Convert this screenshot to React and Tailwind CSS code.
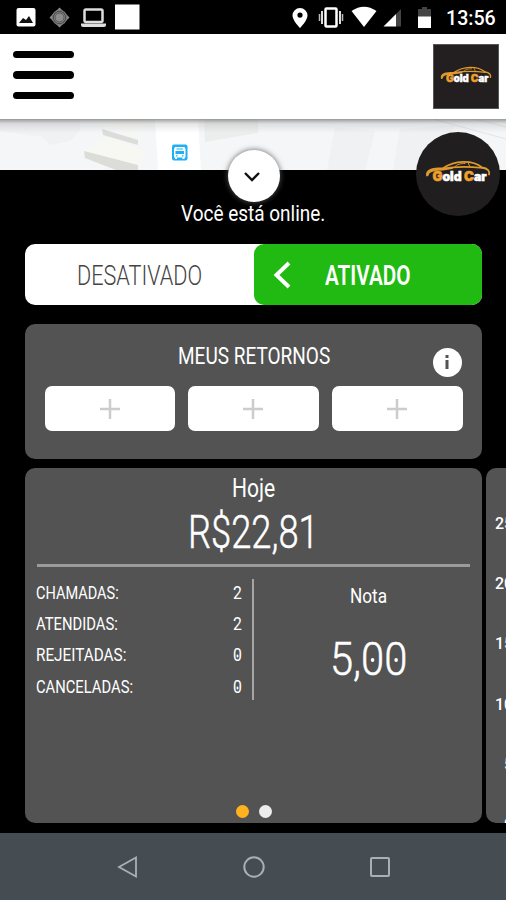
import { useLayoutEffect, useRef, useState } from "react";

// Condensed text: squeezes its content horizontally to the given width.
function Fit({ w, className = "", children }) {
  const ref = useRef(null);
  const [scale, setScale] = useState(1);
  useLayoutEffect(() => {
    setScale(w / ref.current.offsetWidth);
  }, [w]);
  return (
    <span className={`block whitespace-nowrap leading-none ${className}`} style={{ width: w }}>
      <span ref={ref} className="inline-block origin-left" style={{ transform: `scaleX(${scale})` }}>
        {children}
      </span>
    </span>
  );
}

// Zero with a dot in its centre.
function Zero({ dot }) {
  return (
    <span className="relative inline-block">
      0
      <span className={`absolute left-1/2 top-[52%] -translate-x-1/2 -translate-y-1/2 rounded-full bg-white ${dot}`} />
    </span>
  );
}

function Logo({ className }) {
  return (
    <svg viewBox="0 0 66 30" className={className}>
      <g fill="none" stroke="#dd9a2e" strokeLinecap="round">
        <path d="M2 16.500C1 11 7 9.500 18 9.200C25 4.500 30 3 38 2.800C48 2.600 53 5 57 8.500C63 9.500 65 12 64 15.500" strokeWidth="1.800" />
        <path d="M18 9.500C28 7.800 42 7.300 58 9" strokeWidth="1.600" />
        <path d="M2.500 16C3 12 8 10.500 18 10.500L27 9" strokeWidth="2.200" />
        <path d="M29 8.500C32 5 36 4.500 40 4.500M43 3.500L45 8" strokeWidth="1" />
      </g>
      <text x="7.500" y="21.500" textLength="54" lengthAdjust="spacingAndGlyphs" className="font-['Inter'] text-[12.500px] font-black" fill="#fff" stroke="#fff" strokeWidth=".5">
        <tspan className="text-[13.500px]" fill="#f0a02c" stroke="#f0a02c">G</tspan>old <tspan className="text-[13.500px]" fill="#f0a02c" stroke="#f0a02c">C</tspan>ar
      </text>
    </svg>
  );
}

function StatusBar() {
  return (
    <div className="flex h-[34px] shrink-0 items-center bg-black">
      <svg viewBox="0 0 506 34" className="h-[34px] w-[440px] shrink-0" preserveAspectRatio="xMinYMin slice">
        <rect x="16.500" y="8" width="19" height="18.500" rx="2" fill="#fff" />
        <path d="M19 23l4-5 3 2 3-4 4 7z" fill="#111" />
        <circle cx="59.500" cy="17.500" r="5.500" fill="#8b8b8b" stroke="#8b8b8b" />
        <path d="M59.500 7.500l4 4-4-1-4 1zM59.500 27.500l4-4-4 1-4-1zM49.500 17.500l4-4-1 4 1 4zM69.500 17.500l-4-4 1 4-1 4z" fill="#8b8b8b" />
        <circle cx="59.500" cy="17.500" r="7" fill="none" stroke="#777" strokeWidth="1.500" />
        <circle cx="59.500" cy="17.500" r="4.500" fill="none" stroke="#555" />
        <rect x="84.500" y="9.500" width="18" height="12.500" rx="1.500" fill="none" stroke="#ddd" strokeWidth="2.500" />
        <path d="M81 23.500h25v1.500q0 2-2 2H83q-2 0-2-2z" fill="#ddd" />
        <rect x="115" y="4.500" width="24.500" height="25" fill="#fff" />
        <path fillRule="evenodd" d="M300 8a7.500 7.500 0 0 1 7.500 7.500c0 5-7.500 12.500-7.500 12.500s-7.500-7.500-7.500-12.500A7.500 7.500 0 0 1 300 8zm0 4.500a2.600 2.600 0 1 0 0 5.200 2.600 2.600 0 0 0 0-5.200z" fill="#fff" />
        <rect x="325.500" y="8.500" width="11" height="18" rx="1" fill="none" stroke="#fff" strokeWidth="2.500" />
        <path d="M322 11v13M340 11v13" stroke="#ddd" strokeWidth="2" />
        <path d="M319.500 14v7M342.500 14v7" stroke="#bbb" strokeWidth="1.500" />
        <path d="M351.500 11Q364 2.500 376.500 11L364 27z" fill="#fff" />
        <path d="M396 14l5-5v17.500h-5z" fill="#444" />
        <path d="M396 14v12.500h-12.500z" fill="#fff" />
        <path d="M418 9h4V7h5v2h4v8h-13z" fill="#444" />
        <path d="M418 16.500h13V28h-13z" fill="#fff" />
      </svg>
      <Fit w={50} className="ml-[6px] mt-[2px] font-['Roboto'] text-[20px] font-medium text-white">13:56</Fit>
    </div>
  );
}

function MapStrip() {
  return (
    <svg viewBox="0 0 506 51" className="block h-[51px] w-full">
      <defs>
        <linearGradient id="shade" x1="0" x2="0" y1="0" y2="1">
          <stop offset="0" stopColor="#777" stopOpacity=".75" />
          <stop offset=".35" stopColor="#999" stopOpacity=".25" />
          <stop offset="1" stopColor="#aaa" stopOpacity="0" />
        </linearGradient>
      </defs>
      <rect width="506" height="51" fill="#f4f6f7" />
      <path d="M0 0h80v12L70 22l-20 4-8-8L0 12z" fill="#f0f1f3" />
      <path d="M155 0h43l3 51h-43z" fill="#fff" />
      <path d="M105 8l35 12 4-20h-30z" fill="#f6f6f4" />
      <path d="M102 10l36 11v5l-35-10z" fill="#dcdcda" />
      <path d="M86 32l22-14 38 14-8 16z" fill="#f8f8f3" />
      <path d="M84 32l54 14v5h-22L85 39z" fill="#dcdcd9" />
      <path d="M204 0h54v14l-53 9z" fill="#eceded" />
      <path d="M335 8l40 4-10 39h-38zM400 10l55-4-20 45h-42z" fill="#eff1f3" />
      <path d="M433 0l73 20M475 0l31 8" stroke="#e3e4e5" />
      <rect width="506" height="14" fill="url(#shade)" />
      <rect x="172" y="25.500" width="15.500" height="16" rx="2" fill="#1eb0f5" />
      <path d="M175 28h9.500l1 2v8l-1 1v1h-2v-1.500h-5.500V40h-2v-1l-1-1v-8z" fill="#fff" />
      <path d="M176.500 29.500h6.500v1h-6.500zM175.500 32h8.500v3h-8.500zM176 36.200h1.500v1.200H176zM182 36.200h1.500v1.200H182z" fill="#1eb0f5" />
    </svg>
  );
}

function Toggle() {
  return (
    <div className="flex h-[61px] rounded-[10px] bg-white">
      <div className="flex w-[229px] items-center pl-[52px] pt-[3px]">
        <Fit w={125} className="font-['Roboto'] text-[27px] font-light text-[#444]">DESATIVADO</Fit>
      </div>
      <div className="flex flex-1 items-center rounded-[10px] bg-[#20ba12]">
        <svg viewBox="0 0 20 30" className="ml-[18px] h-[30px] w-5">
          <path d="M17 3L4.500 15 17 27" fill="none" stroke="#fff" strokeWidth="4" />
        </svg>
        <Fit w={86} className="ml-[33px] mt-[3px] font-['Roboto'] text-[27px] font-semibold text-white">ATIVADO</Fit>
      </div>
    </div>
  );
}

function Returns() {
  return (
    <div className="relative mt-[19px] h-[135px] rounded-[10px] bg-[#535353] px-[19.5px] pt-[20px]">
      <Fit w={152} className="mx-auto font-['Roboto'] text-[24.500px] text-white">MEUS RETORNOS</Fit>
      <div className="absolute right-[20.5px] top-[23.5px] flex h-[29px] w-[29px] items-center justify-center rounded-full bg-white">
        <svg viewBox="0 0 6 14" className="h-[14px] w-[6px]">
          <path d="M1.500 0h3v3h-3zM1.500 5h3v9h-3z" fill="#535353" />
        </svg>
      </div>
      <div className="mt-[17.500px] grid h-[45px] grid-cols-3 gap-[13px]">
        {[0, 1, 2].map((i) => (
          <div key={i} className="flex items-center justify-center rounded-[7px] bg-white">
            <svg viewBox="0 0 20 20" className="h-5 w-5">
              <path d="M10 0v20M0 10h20" stroke="#ccc" strokeWidth="2.500" />
            </svg>
          </div>
        ))}
      </div>
    </div>
  );
}

const rows = [
  ["CHAMADAS:", 83, 2],
  ["ATENDIDAS:", 82, 2],
  ["REJEITADAS:", 90, 0],
  ["CANCELADAS:", 97, 0],
];

function Today() {
  return (
    <div className="relative flex h-[355px] w-[457px] shrink-0 flex-col rounded-[10px] bg-[#535353] pt-[8px]">
      <Fit w={43} className="mx-auto font-['Roboto'] text-[25px] text-white">Hoje</Fit>
      <Fit w={131} className="mx-auto mt-[8px] font-['Roboto'] text-[46px] font-light text-white [-webkit-text-stroke:0.5px_white]">R$22,81</Fit>
      <div className="mx-[12px] mt-[9px] h-[3px] bg-[#9b9b9b]" />
      <div className="mt-[12px] flex">
        <div className="flex h-[121px] w-[229px] flex-col border-r-2 border-[#a5a5a5] pl-[11px] pr-[10px]">
          {rows.map(([label, w, n]) => (
            <div key={label} className="flex h-[31.200px] shrink-0 items-start justify-between pt-[6px]">
              <Fit w={w} className="font-['Roboto'] text-[17.500px] text-white">{label}</Fit>
              <Fit w={9} className="font-['Roboto'] text-[17.500px] text-white">
                {n === 0 ? <Zero dot="h-[3px] w-[2px]" /> : n}
              </Fit>
            </div>
          ))}
        </div>
        <div className="flex flex-1 flex-col items-center">
          <Fit w={37} className="mt-[7px] font-['Roboto'] text-[20px] text-white">Nota</Fit>
          <Fit w={77} className="mt-[30px] font-['Roboto'] text-[46px] font-light text-white [-webkit-text-stroke:0.5px_white]">
            5,<Zero dot="h-[4px] w-[4px]" /><Zero dot="h-[4px] w-[4px]" />
          </Fit>
        </div>
      </div>
      <div className="absolute bottom-[5px] left-[210.5px] flex gap-[10px]">
        <span className="h-[13px] w-[13px] rounded-full bg-[#ffb11f]" />
        <span className="h-[13px] w-[13px] rounded-full bg-[#ececec]" />
      </div>
    </div>
  );
}

export default function App() {
  return (
    <div className="flex h-[900px] w-[506px] flex-col overflow-hidden bg-black">
      <StatusBar />
      <header className="flex h-[85px] shrink-0 items-center justify-between bg-white pl-[13px] pr-[7px]">
        <div className="mb-[3px] flex flex-col gap-[13px]">
          <span className="h-[7.5px] w-[61px] rounded-full bg-black" />
          <span className="h-[7.5px] w-[61px] rounded-full bg-black" />
          <span className="h-[7.5px] w-[61px] rounded-full bg-black" />
        </div>
        <div className="flex h-[65px] w-[66px] items-center justify-center border border-[#555] bg-[#231f20]">
          <Logo className="h-6 w-[52px]" />
        </div>
      </header>
      <main className="relative flex min-h-0 flex-1 flex-col overflow-hidden">
        <MapStrip />
        <div className="absolute left-[228px] top-[31px] flex h-[52px] w-[52px] items-center justify-center rounded-full bg-white shadow-[0_0_5px_1px_rgba(90,90,90,0.7)]">
          <svg viewBox="0 0 16 10" className="mr-[4px] mt-[1px] h-[10px] w-4">
            <path d="M1 1l7 7 7-7" fill="none" stroke="#111" strokeWidth="2.400" />
          </svg>
        </div>
        <div className="absolute left-[416px] top-[13px] flex h-[84px] w-[84px] items-center justify-center rounded-full bg-[#211e1f]">
          <Logo className="h-[30px] w-[66px]" />
        </div>
        <Fit w={144} className="mx-auto mt-[33px] font-['Roboto'] text-[22px] text-white">Você está online.</Fit>
        <div className="mt-[19px] pl-[25px] pr-[24px]">
          <Toggle />
          <Returns />
        </div>
        <div className="mt-[9px] flex gap-1 overflow-hidden pl-[25px]">
          <Today />
          <div className="flex h-[355px] w-[60px] shrink-0 flex-col overflow-hidden rounded-l-[10px] bg-[#535353] pl-[9px] pt-[46px] font-['Roboto'] text-[16px] font-medium text-white">
            {[25, 20, 15, 10, 5, 0].map((n) => (
              <span key={n} className="h-[60.200px] w-[18px] shrink-0 text-right leading-[20px]">{n}</span>
            ))}
          </div>
        </div>
      </main>
      <nav className="flex h-[67px] shrink-0 items-center justify-between bg-[#464d52] pl-[116px] pr-[114px]">
        <svg viewBox="0 0 24 24" className="h-6 w-6" fill="none" stroke="#a9b0b3" strokeWidth="1.800">
          <path d="M20 2.500v19L3 12z" />
        </svg>
        <svg viewBox="0 0 24 24" className="h-6 w-6" fill="none" stroke="#a9b0b3" strokeWidth="2">
          <circle cx="12" cy="12" r="9.700" />
        </svg>
        <svg viewBox="0 0 24 24" className="h-6 w-6" fill="none" stroke="#a9b0b3" strokeWidth="2">
          <rect x="3" y="3" width="18" height="18" rx="1" />
        </svg>
      </nav>
    </div>
  );
}
